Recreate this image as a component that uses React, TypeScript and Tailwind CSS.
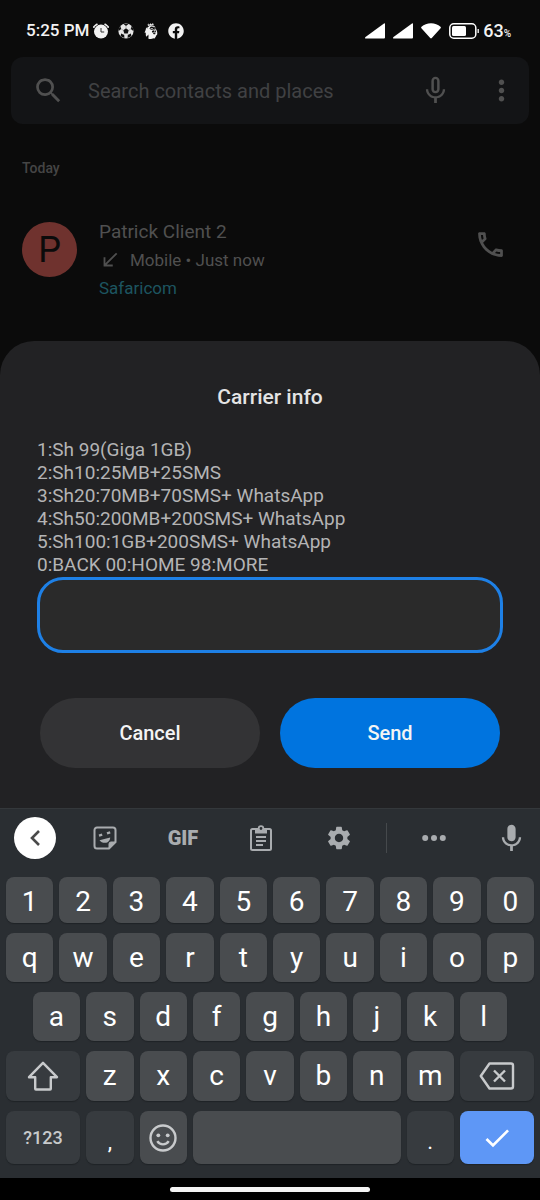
import type { ReactNode } from "react";
import clsx from "clsx";
import {
  MdCheck,
  MdMic,
  MdMicNone,
  MdMoreVert,
  MdOutlinePhone,
  MdSearch,
  MdSettings,
  MdSouthWest,
} from "react-icons/md";
import { FaFacebook } from "react-icons/fa";
import { SiPremierleague } from "react-icons/si";

const MENU = [
  "1:Sh 99(Giga 1GB)",
  "2:Sh10:25MB+25SMS",
  "3:Sh20:70MB+70SMS+ WhatsApp",
  "4:Sh50:200MB+200SMS+ WhatsApp",
  "5:Sh100:1GB+200SMS+ WhatsApp",
  "0:BACK 00:HOME 98:MORE",
];

function AlarmIcon() {
  return (
    <svg viewBox="0 0 16 16" className="size-4" aria-hidden="true">
      <path d="M1 4 3.800 1.500M15 4l-2.800-2.500" stroke="#f2f2f2" strokeWidth="2" strokeLinecap="round" />
      <circle cx="8" cy="8.600" r="7.600" fill="#0b0b0b" />
      <circle cx="8" cy="8.600" r="7" fill="#f2f2f2" />
      <path d="M8 5v4h3.200" stroke="#333" strokeWidth="1" fill="none" />
    </svg>
  );
}

function BallIcon() {
  return (
    <svg viewBox="0 0 16 16" className="size-4" aria-hidden="true">
      <circle cx="8" cy="8" r="7.600" fill="#e6e6e6" />
      <g fill="#111">
        <path d="m8 5.300 2.700 2-1 3.200H6.300l-1-3.200z" />
        <path d="M5.500.9h5L8 2.900zM.6 6.200 2.200 2.800l1 3.200-2.500 2zM15.400 6.200l-1.600-3.400-1 3.200 2.500 2zM2.600 13.200l.5-2.700 3.100 1.600.2 3zM13.400 13.200l-.5-2.700-3.100 1.600-.2 3z" />
      </g>
      <path d="M8 2.900v2.400M3.200 6l2.100 1.300M12.800 6l-2.100 1.300M6.300 10.500l-.9 1.400M9.700 10.500l.9 1.400" stroke="#777" strokeWidth=".5" />
    </svg>
  );
}

function SignalIcon() {
  return (
    <svg viewBox="0 0 20 16" className="h-4 w-5" fill="#fff" aria-hidden="true">
      <path d="M19 .4c.6-.3 1 0 1 .6v13.600q0 1-1 1H1c-1.200 0-1.300-1-.5-1.700z" />
    </svg>
  );
}

function WifiIcon() {
  return (
    <svg viewBox="0 0 20 16" className="h-4 w-5" fill="#fff" aria-hidden="true">
      <path d="M10 .3c3.700 0 7 1.300 9.500 3.500.5.500.6 1 .1 1.500l-8.800 9.800q-.8.8-1.600 0L.4 5.300c-.5-.5-.4-1 .1-1.500C3 1.600 6.300.3 10 .3z" />
    </svg>
  );
}

function BatteryIcon() {
  return (
    <svg viewBox="0 0 30 16" className="h-4 w-[30px]" aria-hidden="true">
      <rect x=".8" y=".8" width="26" height="14.400" rx="4" fill="none" stroke="#fff" strokeWidth="1.500" />
      <rect x="3" y="3" width="14" height="10" rx="1.500" fill="#fff" />
      <path d="M29.200 6v4" stroke="#fff" strokeWidth="1.300" />
    </svg>
  );
}

function StickerIcon() {
  return (
    <svg viewBox="0 0 24 24" className="size-6" fill="none" stroke="#a9acaf" strokeWidth="2" aria-hidden="true">
      <path d="M16 22.500H4A2.500 2.500 0 0 1 1.500 20V4A2.500 2.500 0 0 1 4 1.500h16A2.500 2.500 0 0 1 22.500 4v12z" />
      <path d="M22.500 16H18a2 2 0 0 0-2 2v4.500z" fill="#a9acaf" strokeWidth="1" />
      <path d="M6 9.600 9.200 8.600M14 7.400l3.200-1" strokeWidth="2.400" />
      <path d="M6.500 14.200 17.200 11.500c0 3-2.200 5.300-5 5.300-2.600 0-4.700-1-5.700-2.600z" fill="#a9acaf" stroke="none" />
    </svg>
  );
}

function ClipboardIcon() {
  return (
    <svg viewBox="0 0 24 26" className="h-[26px] w-6" fill="none" stroke="#a9acaf" strokeWidth="2" aria-hidden="true">
      <rect x="2" y="4" width="20" height="21" rx="1.500" />
      <path d="M6 4h12v4.500H6z" fill="#a9acaf" stroke="none" />
      <circle cx="12" cy="3.500" r="2.300" fill="#2a2e32" strokeWidth="1.800" />
      <path d="M7 12h10M7 16h10M7 20h7" />
    </svg>
  );
}

function MoreIcon() {
  return (
    <svg viewBox="0 0 24 6" className="h-1.5 w-6" fill="#a9acaf" aria-hidden="true">
      <circle cx="3.200" cy="3" r="3" />
      <circle cx="12" cy="3" r="3" />
      <circle cx="20.800" cy="3" r="3" />
    </svg>
  );
}

function ShiftIcon() {
  return (
    <svg viewBox="0 0 32 30" className="h-[30px] w-8" fill="none" stroke="#c8cacc" strokeWidth="2.400" strokeLinejoin="round" aria-hidden="true">
      <path d="M16 1.800 30 16.200h-6.200v11.600q0 .7-.7.7H8.900q-.7 0-.7-.7V16.200H2z" />
    </svg>
  );
}

function BackspaceIcon() {
  return (
    <svg viewBox="0 0 36 28" className="h-7 w-9" fill="none" stroke="#c8cacc" strokeWidth="2.400" strokeLinejoin="round" aria-hidden="true">
      <path d="M10.500 1.500H32q2 0 2 2v21q0 2-2 2H10.500L1.800 14z" />
      <path d="m15 8.500 11 11M26 8.500l-11 11" />
    </svg>
  );
}

function SmileIcon() {
  return (
    <svg viewBox="0 0 28 28" className="size-7" fill="none" stroke="#c8cacc" strokeWidth="2.400" aria-hidden="true">
      <circle cx="14" cy="14" r="12.500" />
      <circle cx="9.300" cy="11.300" r="1.900" fill="#c8cacc" stroke="none" />
      <circle cx="18.700" cy="11.300" r="1.900" fill="#c8cacc" stroke="none" />
      <path d="M8.300 17.200c2.600 4.200 8.800 4.200 11.400 0" />
    </svg>
  );
}

interface KeyProps {
  children?: ReactNode;
  label?: string;
  className?: string;
}

function Key({ children, label, className = "col-span-2 bg-[#494c4f]" }: KeyProps) {
  return (
    <button
      type="button"
      aria-label={label}
      className={clsx(
        "flex items-center justify-center rounded-lg text-[28px] leading-8 text-white shadow-[0_1px_1px_#1f2326]",
        className,
      )}
    >
      {children}
    </button>
  );
}

function StatusBar() {
  return (
    <div className="flex h-[57px] items-center justify-between pt-1 pr-[29px] pl-[26px] font-medium text-[#f2f2f2]">
      <div className="flex items-center gap-1">
        <span className="text-[17px]">5:25 PM</span>
        <div className="flex items-center gap-[9px]">
          <AlarmIcon />
          <BallIcon />
          <SiPremierleague className="size-4" />
          <FaFacebook className="size-4" />
        </div>
      </div>
      <div className="flex items-center gap-2">
        <SignalIcon />
        <SignalIcon />
        <WifiIcon />
        <div className="flex items-center gap-1">
          <BatteryIcon />
          <span className="text-lg">
            63<span className="text-[10px]">%</span>
          </span>
        </div>
      </div>
    </div>
  );
}

function RecentCalls() {
  return (
    <main className="pb-[39px] text-[#505050]">
      <div className="mx-[11px] flex h-[67px] items-center rounded-xl bg-[#131416] pr-[11px] pl-[21px]">
        <MdSearch className="size-[33px]" />
        <input
          type="text"
          aria-label="Search contacts and places"
          placeholder="Search contacts and places"
          className="ml-[23px] min-w-0 flex-1 text-xl outline-none placeholder:text-[#404143]"
        />
        <button type="button" aria-label="Voice search">
          <MdMicNone className="size-[33px]" />
        </button>
        <button type="button" aria-label="More options" className="ml-[33px]">
          <MdMoreVert className="size-[33px]" />
        </button>
      </div>
      <h2 className="mt-[34px] px-[22px] text-sm leading-5 font-medium text-[#454545]">Today</h2>
      <div className="mt-10 flex items-start px-[22px]">
        <div className="mt-1 flex size-[55px] items-center justify-center rounded-full bg-[#6f322e] text-4xl text-[#0b0b0b]">
          P
        </div>
        <div className="ml-[22px] flex-1">
          <p className="text-[19px] leading-7">Patrick Client 2</p>
          <p className="flex items-center text-[17px] leading-7">
            <MdSouthWest className="mr-[9px] size-[22px]" />
            Mobile • Just now
          </p>
          <p className="text-[17px] leading-7 text-[#1d5560]">Safaricom</p>
        </div>
        <button type="button" aria-label="Call Patrick Client 2" className="mt-[10px] mr-[11px]">
          <MdOutlinePhone className="size-[33px]" />
        </button>
      </div>
    </main>
  );
}

function CarrierDialog() {
  return (
    <form
      role="dialog"
      aria-labelledby="carrier-title"
      className="flex-1 rounded-t-[34px] bg-[#222224] px-[37px] pt-[42px] pb-10"
      onSubmit={(e) => e.preventDefault()}
    >
      <h1 id="carrier-title" className="text-center text-[21px] leading-7 font-medium text-[#e4e4e4]">
        Carrier info
      </h1>
      <label htmlFor="reply" className="mt-[27px] block text-[19px] leading-[23px] text-[#b4b4b5]">
        {MENU.map((line) => (
          <span key={line} className="block">
            {line}
          </span>
        ))}
      </label>
      <input
        id="reply"
        type="text"
        className="mt-px block h-[76px] w-full rounded-[26px] border-3 border-[#1e80e6] bg-[#2a2a2a] px-6 text-xl text-white outline-none"
      />
      <div className="mt-[45px] grid grid-cols-2 gap-5 px-[3px] text-xl font-medium text-[#f4f4f4]">
        <button type="button" className="h-[70px] rounded-full bg-[#333335]">
          Cancel
        </button>
        <button type="submit" className="h-[70px] rounded-full bg-[#0074df]">
          Send
        </button>
      </div>
    </form>
  );
}

function Toolbar() {
  return (
    <div className="grid h-[58px] grid-cols-[66fr_78fr_78fr_78fr_78fr_16fr_80fr_66fr] items-center justify-items-center text-[#a9acaf]">
      <button
        type="button"
        aria-label="Back"
        className="ml-1 flex size-[42px] items-center justify-center rounded-full bg-white"
      >
        <svg viewBox="0 0 12 18" className="h-[18px] w-3" fill="none" stroke="#4a4a4a" strokeWidth="2.600" aria-hidden="true">
          <path d="m10 2-7 7 7 7" />
        </svg>
      </button>
      <button type="button" aria-label="Stickers">
        <StickerIcon />
      </button>
      <button type="button" className="text-xl leading-6 font-black">
        GIF
      </button>
      <button type="button" aria-label="Clipboard">
        <ClipboardIcon />
      </button>
      <button type="button" aria-label="Settings">
        <MdSettings className="size-7" />
      </button>
      <span className="h-[30px] w-px bg-[#45494c]" />
      <button type="button" aria-label="More">
        <MoreIcon />
      </button>
      <button type="button" aria-label="Voice input" className="justify-self-end pr-3">
        <MdMic className="size-[33px]" />
      </button>
    </div>
  );
}

function Keyboard() {
  return (
    <section aria-label="Keyboard" className="border-t border-[#34383b] bg-[#2a2e32] pb-[14px]">
      <Toolbar />
      <div className="mt-[10px] grid grid-cols-20 grid-rows-[46px_49px_49px_50px_53px] gap-x-1.5 gap-y-[10px] px-1.5">
        {"1234567890".split("").map((k) => (
          <Key key={k} className="col-span-2 bg-[#494c4f] pt-[3px]">
            {k}
          </Key>
        ))}
        {"qwertyuiop".split("").map((k) => (
          <Key key={k}>{k}</Key>
        ))}
        {"asdfghjkl".split("").map((k) => (
          <Key
            key={k}
            className={k === "a" ? "col-span-2 col-start-2 bg-[#494c4f]" : "col-span-2 bg-[#494c4f]"}
          >
            {k}
          </Key>
        ))}
        <Key label="Shift" className="col-span-3 col-start-1 bg-[#373b3f]">
          <ShiftIcon />
        </Key>
        {"zxcvbnm".split("").map((k) => (
          <Key key={k}>{k}</Key>
        ))}
        <Key label="Backspace" className="col-span-3 bg-[#373b3f]">
          <BackspaceIcon />
        </Key>
        <Key className="col-span-3 bg-[#373b3f]">
          <span className="text-lg font-medium text-[#c8cacc]">?123</span>
        </Key>
        <Key className="col-span-2 bg-[#373b3f] pt-2">
          <span className="text-[22px]">,</span>
        </Key>
        <Key label="Emoji">
          <SmileIcon />
        </Key>
        <Key label="Space" className="col-span-8 bg-[#494c4f]" />
        <Key className="col-span-2 bg-[#373b3f] pt-2">
          <span className="text-[22px]">.</span>
        </Key>
        <Key label="Done" className="col-span-3 bg-[#5e97f6]">
          <MdCheck className="size-8" />
        </Key>
      </div>
    </section>
  );
}

export default function App() {
  return (
    <div className="flex min-h-screen flex-col bg-[#0b0b0b] font-['Roboto',sans-serif]">
      <StatusBar />
      <RecentCalls />
      <CarrierDialog />
      <Keyboard />
      <div className="flex h-[22px] items-center justify-center bg-black">
        <span className="h-[5px] w-[200px] rounded-full bg-[#f4f4f4]" />
      </div>
    </div>
  );
}
